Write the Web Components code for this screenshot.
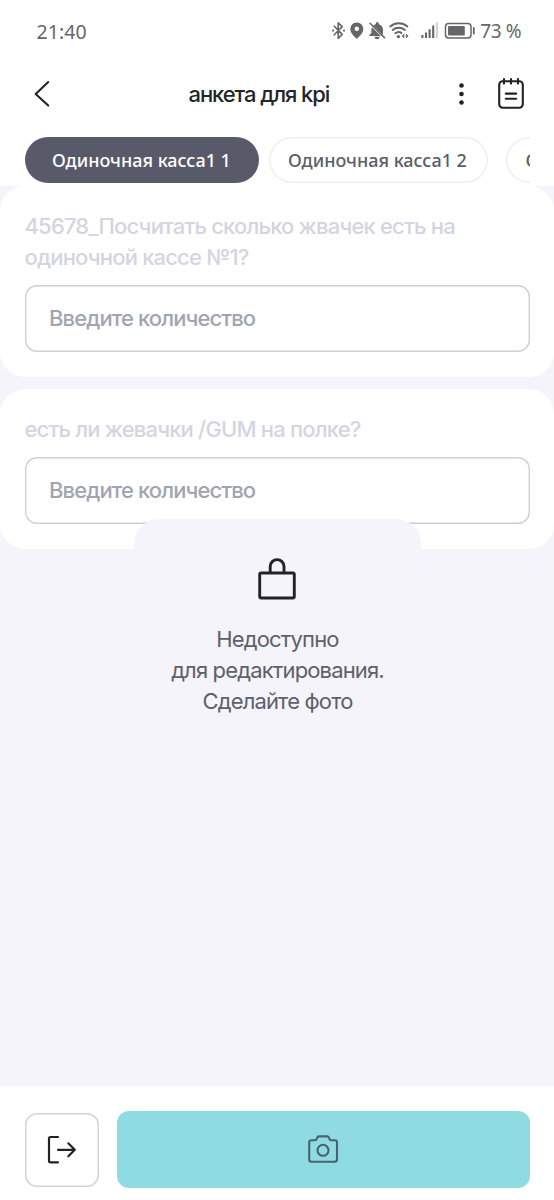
<!DOCTYPE html>
<html lang="ru">
<head>
<meta charset="utf-8">
<title>анкета для kpi</title>
<style>
html,body{margin:0;padding:0;background:#fff}
body{font-family:Inter,"Liberation Sans",sans-serif;color:#24242b;overflow:hidden}
</style>
</head>
<body>
<survey-screen></survey-screen>
<script>
const define = (name, html) => customElements.define(name, class extends HTMLElement {
  constructor() {
    super();
    const t = document.createElement('template');
    t.innerHTML = html;
    this.attachShadow({ mode: 'open' }).append(t.content.cloneNode(true));
  }
});

define('status-bar', `
<style>
:host{display:flex;justify-content:space-between;height:62px;box-sizing:border-box;padding:19px 33px 0 36.5px;font:400 19.5px/25px "Noto Sans",sans-serif;color:#66666a}
svg{display:block;width:146px;height:25px}
.r{display:flex;gap:3px}
.time{letter-spacing:.05px}
.pct{font-size:19px;letter-spacing:-.45px;white-space:nowrap}
</style>
<span class="time">21:40</span>
<div class="r">
<svg viewBox="331 19 146 25" fill="none" stroke="#66666a" stroke-width="1.6" stroke-linejoin="round" stroke-linecap="round">
<path d="M334.3 26.2 342.2 34.4 338.2 38.4V22.8L342.2 26.6 334.3 34.8"/>
<g fill="#66666a" stroke="none"><circle cx="333.1" cy="30.6" r="1.1"/><circle cx="344" cy="30.6" r="1.1"/>
<path fill-rule="evenodd" d="M356.8 22.4a6.4 6.4 0 0 0-6.5 6.4c0 4.7 4.4 8 6.5 10.1 2.1-2.1 6.5-5.4 6.5-10.1a6.4 6.4 0 0 0-6.5-6.4Zm0 4.1a2.2 2.2 0 1 1 0 4.4 2.2 2.2 0 0 1 0-4.4Z"/>
<path d="M373.2 25.4 383 35V30c0-3-1.7-5.1-4.2-5.8v-.7a1.5 1.5 0 0 0-3 0v.7a7 7 0 0 0-2.6 1.2ZM371.9 27.2l9 8.8H369.4v-1.2l2-1.8V29.5c0-.8.2-1.6.5-2.3ZM374.6 36.8h5a2.5 2.5 0 0 1-5 0Z"/></g>
<path d="M370 23.2 384.5 37.6" stroke-width="1.5"/>
<path d="M390.2 26.4a13.4 13.4 0 0 1 17.2 0M392.7 30a9.5 9.5 0 0 1 12.2 0M395.4 33.3a5.2 5.2 0 0 1 6 -.4" stroke-width="1.9"/>
<circle cx="398.4" cy="36.6" r="1.7" fill="#66666a" stroke="none"/>
<g fill="#66666a" stroke="none"><path d="M404.3 33.4v5l-2.6-2.5ZM405.9 33.4v5l2.6-2.5Z"/></g>
<g stroke-width="2.1" stroke-linecap="butt"><path d="M422.4 35v3M426 32.4V38M429.6 29.2V38M433.2 25.6V38"/><path d="M436.9 22.3V38" stroke="#d4d4d6"/></g>
<rect x="445.5" y="23.4" width="25.5" height="14.6" rx="3.2" stroke-width="1.5"/><rect x="448" y="25.9" width="16.8" height="9.6" rx="1" fill="#66666a" stroke="none"/>
<path d="M473.8 28v5.6" stroke-width="1.8"/>
</svg>
<span class="pct">73 %</span></div>`);

define('app-header', `
<style>
:host{display:grid;grid-template-columns:188.5px 1fr 104px;height:75px;box-sizing:border-box;padding-top:12px;align-items:start}
h1{margin:0;font-size:22px;line-height:40px;font-weight:500;letter-spacing:-1.08px;white-space:nowrap}
svg{display:block}
.back{margin:5px 0 0 30px}
</style>
<svg class="back" width="24" height="30" viewBox="30 79 24 30" fill="none" stroke="#222228" stroke-width="2.1" stroke-linecap="round" stroke-linejoin="round"><path d="M48.2 82 35.7 94 48.2 105.6"/></svg>
<h1>анкета для kpi</h1>
<svg width="80" height="40" viewBox="450 74 80 40" fill="none" stroke="#222228" stroke-width="2.1" stroke-linecap="round"><g fill="#222228" stroke="none"><circle cx="461.5" cy="85.5" r="2.3"/><circle cx="461.5" cy="94" r="2.3"/><circle cx="461.5" cy="102.5" r="2.3"/></g><rect x="499.2" y="81.3" width="23.6" height="26.4" rx="3.5"/><path d="M504 79v4.6M511 79v4.6M518 79v4.6M505.8 93.6h10.4M505.8 98.8h10.4"/></svg>`);

define('chip-tab', `
<style>
:host{display:block;flex:none;box-sizing:border-box;height:46px;width:219px;box-shadow:inset 0 0 0 1.5px #eeeef3;border-radius:23px;padding-left:19.5px;font:500 18px/47px "Noto Sans",sans-serif;color:#5a5d6b;white-space:nowrap}
:host([active]){background:#585a6a;box-shadow:none;color:#fff;width:234.5px;padding-left:27.5px}
</style><slot></slot>`);

define('chip-row', `
<style>:host{display:flex;margin:0 24.5px;overflow:hidden;height:49px;gap:18.5px}
::slotted(:first-child){margin-right:-9px}</style><slot></slot>`);

define('question-card', `
<style>
:host{display:block;background:#fff;border-radius:25px;padding:25px 24.5px}
.q{font-size:22px;line-height:31px;color:#d4d4e2;font-weight:500;letter-spacing:-.82px;margin-bottom:12px;white-space:nowrap}
.input{box-sizing:border-box;height:67px;box-shadow:inset 0 0 0 1.4px #cfcedb;border-radius:12px;padding:0 24.5px;font-size:22px;line-height:67px;color:#a1a5b3;font-weight:500;letter-spacing:-.9px}
</style>
<div class="q"><slot></slot></div><div class="input">Введите количество</div>`);

define('lock-notice', `
<style>
:host{display:block;box-sizing:border-box;width:287px;padding-top:34px;border-radius:25px 25px 0 0;background:#f5f4fa;text-align:center;font-size:22px;line-height:31px;color:#5d606d;letter-spacing:-.85px}
svg{display:block;margin:0 auto 23px;position:relative;left:-1px}
</style>
<svg width="46" height="48" viewBox="254 553 46 48" fill="none" stroke="#222228" stroke-width="2.9"><rect x="259.7" y="573" width="34.6" height="25" rx="1.5"/><path d="M270.2 572v-5.5a6.9 6.9 0 0 1 13.8 0v5.5"/></svg>
<slot></slot>`);

define('action-bar', `
<style>
:host{display:flex;box-sizing:border-box;height:114px;padding:25px 24.5px 0;background:#fff;gap:18px}
.exit{box-sizing:border-box;width:74.5px;height:74px;margin-top:1.5px;box-shadow:inset 0 0 0 1.5px #d3d2df;border-radius:12px}
.photo{flex:1;height:77px;border-radius:12px;background:#8edce1}
.exit,.photo{display:flex;align-items:center;justify-content:center}
svg{display:block;flex:none}
</style>
<div class="exit"><svg width="40" height="40" viewBox="42 1129.5 40 40" fill="none" stroke="#222228" stroke-width="2.2" stroke-linecap="round" stroke-linejoin="round"><path d="M58 1136.5h-7.5a1.5 1.5 0 0 0-1.5 1.5v22.3a1.5 1.5 0 0 0 1.5 1.5H58M58 1149.3h16M68.3 1142.8l6.5 6.5-6.5 6.5"/></svg></div>
<div class="photo"><svg width="40" height="40" viewBox="303 1129.5 40 40" fill="none" stroke="#4c6070" stroke-width="2.1" stroke-linejoin="round"><path d="M311.5 1139.8h3.2c1.2 0 1.6-.5 2.1-1.6l.6-1.3c.3-.7.8-1 1.6-1h8.2c.8 0 1.3.3 1.6 1l.6 1.3c.5 1.1.9 1.6 2.1 1.6h3.2c1.3 0 2.3.9 2.3 2.2v17c0 1.3-1 2.2-2.3 2.2h-23.2c-1.3 0-2.3-.9-2.3-2.2v-17c0-1.3 1-2.2 2.3-2.2Z"/><circle cx="323" cy="1149.8" r="5.5"/></svg></div>`);

define('survey-screen', `
<style>
:host{display:flex;flex-direction:column;width:554px;height:1200px;background:#fff;overflow:hidden}
main{position:relative;flex:1;display:flex;flex-direction:column;gap:12px;background:#f5f4fa}
lock-notice{position:absolute;left:50%;top:333px;transform:translateX(-143px)}
</style>
<status-bar></status-bar>
<app-header></app-header>
<chip-row><chip-tab active>Одиночная касса1 1</chip-tab><chip-tab>Одиночная касса1 2</chip-tab><chip-tab>Одиночная касса1 3</chip-tab></chip-row>
<main>
<question-card>45678_Посчитать сколько жвачек есть на<br>одиночной кассе №1?</question-card>
<question-card>есть ли жевачки /GUM на полке?</question-card>
<lock-notice>Недоступно<br>для редактирования.<br>Сделайте фото</lock-notice>
</main>
<action-bar></action-bar>`);
</script>
</body>
</html>
